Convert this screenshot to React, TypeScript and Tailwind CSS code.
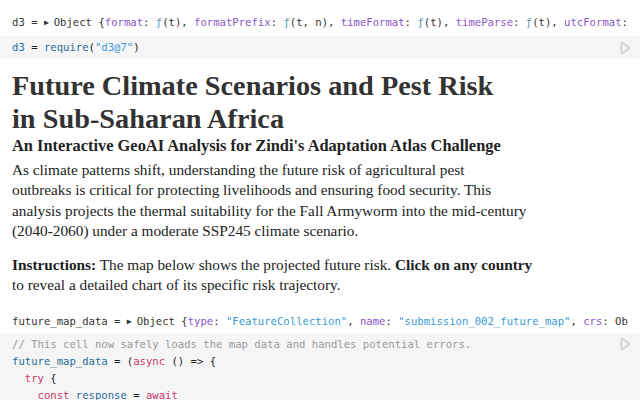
import React from 'react';

const mono = "font-['DejaVu_Sans_Mono',monospace]";
const serif = "font-['Liberation_Serif',serif]";

function PlayIcon() {
    return (
        <svg width="10" height="14" viewBox="0 0 10 14" className="shrink-0">
            <path d="M1.5 1.5 L8.5 6.2 Q9.3 7 8.5 7.8 L1.5 12.5 Z" fill="none" stroke="#c9c9c9" strokeWidth="1.4" strokeLinejoin="round" />
        </svg>
    );
}

const K = ({ children }: { children: React.ReactNode }) => <span className="text-[#8a56c9]">{children}</span>;
const F = () => <span className="text-[#5b97b0]">ƒ</span>;
const S = ({ children }: { children: React.ReactNode }) => <span className="text-[#3a9bd3]">{children}</span>;
const D = ({ children }: { children: React.ReactNode }) => <span className="text-[#2a6d96]">{children}</span>;
const KW = ({ children }: { children: React.ReactNode }) => <span className="text-[#c9386d]">{children}</span>;

function Caret() {
    return <span className="inline-block text-[8px] align-[1px] mr-[5px]">▶</span>;
}

export default function App() {
    return (
        <div className="w-[640px] h-[400px] overflow-hidden bg-white text-[#1b1e23]">
            {/* d3 output */}
            <div className={`${mono} text-[10.6px] leading-[17px] whitespace-nowrap px-3 pt-[14px] pb-[5px] text-[#333]`}>
                d3 = <Caret />Object {'{'}<K>format</K>: <F />(t), <K>formatPrefix</K>: <F />(t, n), <K>timeFormat</K>: <F />(t), <K>timeParse</K>: <F />(t), <K>utcFormat</K>:
            </div>
            <div className={`${mono} text-[10.6px] leading-[17px] whitespace-nowrap bg-[#f5f5f5] pl-3 pr-[10px] py-[3px] flex items-center justify-between`}>
                <div>
                    <D>d3</D> = <D>require</D>(<S>"d3@7"</S>)
                </div>
                <PlayIcon />
            </div>

            {/* prose */}
            <div className={`${serif} px-3 pt-[10px] whitespace-nowrap`}>
                <h1 className="text-[28.3px] leading-[33px] font-bold text-[#333]">
                    Future Climate Scenarios and Pest Risk<br />in Sub-Saharan Africa
                </h1>
                <h2 className="text-[16.4px] leading-[22px] font-bold text-[#222]">
                    An Interactive GeoAI Analysis for Zindi's Adaptation Atlas Challenge
                </h2>
                <p className="text-[15.3px] leading-[20.4px] mt-[3px]">
                    As climate patterns shift, understanding the future risk of agricultural pest<br />
                    outbreaks is critical for protecting livelihoods and ensuring food security. This<br />
                    analysis projects the thermal suitability for the Fall Armyworm into the mid-century<br />
                    (2040-2060) under a moderate SSP245 climate scenario.
                </p>
                <p className="text-[15.3px] leading-[20.4px] mt-[13px]">
                    <b>Instructions:</b> The map below shows the projected future risk. <b>Click on any country</b><br />
                    to reveal a detailed chart of its specific risk trajectory.
                </p>
            </div>

            {/* future_map_data output */}
            <div className={`${mono} text-[10.6px] leading-[17px] whitespace-nowrap px-3 pt-[18px] pb-[3px] text-[#333]`}>
                future_map_data = <Caret />Object {'{'}<K>type</K>: <S>"FeatureCollection"</S>, <K>name</K>: <S>"submission_002_future_map"</S>, <K>crs</K>: Ob
            </div>
            <div className={`${mono} text-[10.6px] leading-[17px] whitespace-pre bg-[#f5f5f5] pl-3 pr-[10px] pt-[3px] pb-4 flex justify-between`}>
                <div>
                    <div className="text-[#999]">// This cell now safely loads the map data and handles potential errors.</div>
                    <div><D>future_map_data</D> = (<KW>async</KW> () =&gt; {'{'}</div>
                    <div>  <KW>try</KW> {'{'}</div>
                    <div>    <KW>const</KW> <D>response</D> = <KW>await</KW></div>
                </div>
                <div className="pt-[1px]"><PlayIcon /></div>
            </div>
        </div>
    );
}
